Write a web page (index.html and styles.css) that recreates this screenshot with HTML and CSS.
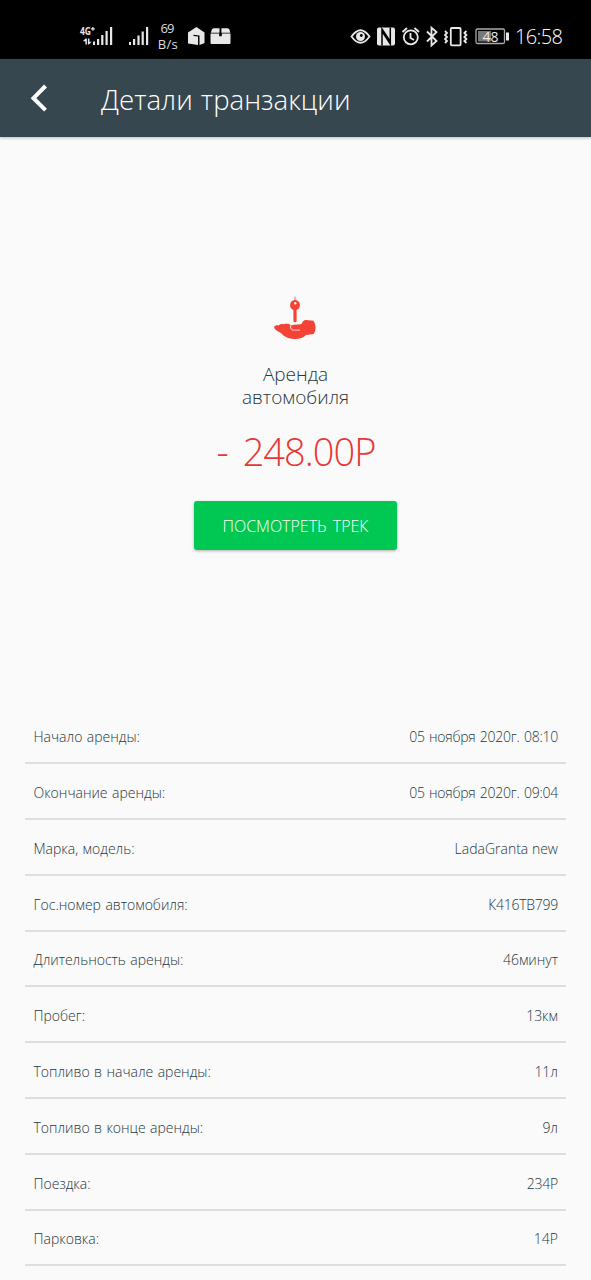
FILE: index.html
```html
<!DOCTYPE html>
<html lang="ru">
<head>
<meta charset="utf-8">
<title>Детали транзакции</title>
<link rel="stylesheet" href="styles.css">
</head>
<body>
<div class="status">
  <svg class="status-left" width="170" height="45" viewBox="0 0 170 45">
    <g fill="#e8e8e8">
      <text class="net" x="10" y="20" textLength="11" lengthAdjust="spacingAndGlyphs">4G</text>
      <path d="M21 13.200h1.300v-1.300h1.200v1.300h1.300v1.200h-1.300v1.300h-1.200v-1.300H21z"/>
      <path d="M12.800 26.200l2.800-2.700h1.300v6h-1.500v-3.300zM17.900 23.500h1.500v3.300h2.300l-2.800 2.700h-1z"/>
      <path d="M23 26.500h2V30h-2zM27 24h2.200v6h-2.200zM31.200 20h2.200v10h-2.200zM35.500 16h2.200v14h-2.200zM40 12h2.200v18H40z"/>
      <path d="M59 27h2v3h-2zM63 24h2.200v6H63zM67.400 20.500h2.200V30h-2.200zM71.600 16.500h2.200V30h-2.200zM76 12h2.200v18H76z"/>
      <path d="M118 17.500l8.500-5.500 8 5.500V28l-5 2V20.500l-6-.8v1.200l4.500.6V30L118 28.500z"/>
      <path d="M140.500 18.600h8.700v2.600h2.600v-2.600h8.700V28a1 1 0 0 1-1 1h-18a1 1 0 0 1-1-1zM142 14.200l1.500-1h6v4.600h-8.700zM151.400 13.200h6.400l1.500 1 1 3.600h-8.900z"/>
    </g>
    <g class="speed"><text x="97.500" y="18.300" text-anchor="middle" textLength="14">69</text><text x="97.800" y="33.800" text-anchor="middle" textLength="20">B/s</text></g>
  </svg>
  <svg class="status-right" width="240" height="45" viewBox="0 0 240 45">
    <g fill="none" stroke="#e8e8e8" stroke-width="1.800">
      <path d="M11.500 21.500q9-12.500 18 0q-9 12.500-18 0z"/><circle cx="20.500" cy="21.500" r="4.500" fill="#e8e8e8" stroke="none"/><circle cx="21.300" cy="20.500" r="1.400" fill="#000" stroke="none"/>
      <rect x="37" y="12.500" width="18" height="18" rx="2" fill="#e8e8e8" stroke="none"/>
      <path d="M42 30.500V14l8.300 12.500M50.300 12.500V29L42.500 17" stroke="#000" stroke-width="1.500"/>
      <circle cx="70.800" cy="22.300" r="7"/><path d="M70.500 18v5l3.500 2M62.500 17l4.500-4M79 17l-4.500-4"/>
      <path d="M87 16.500l9.500 9.500-5 4.500V12.700l5 4.300-9.500 9.500"/>
      <rect x="110.800" y="13" width="9.800" height="17.300" rx="1"/><path d="M105 16l2 2-2 2 2 2-2 2 2 2-2 2M126.400 16l-2 2 2 2-2 2 2 2-2 2 2 2"/>
      <rect x="136" y="14" width="28.500" height="14.500" rx="1.500" stroke="#aaa" stroke-width="1.300"/><path d="M138 16h13v10.500h-13z" fill="#777" stroke="none"/><path d="M167.500 17.500v8" stroke-width="3"/>
    </g>
    <text class="battery" x="150.500" y="26.800" text-anchor="middle" textLength="16">48</text>
    <text class="clock" x="175" y="28.800" textLength="48">16:58</text>
  </svg>
</div>
<header class="bar">
  <svg class="back" width="20" height="30" viewBox="0 0 20 30"><path d="M17.500 3L5.500 15.200l12 12" fill="none" stroke="#fff" stroke-width="4"/></svg>
  <h1 class="title">Детали транзакции</h1>
</header>
<main>
  <section class="summary">
    <svg class="rent" width="44" height="44" viewBox="0 0 44 44" fill="#f44336">
      <path d="M21.600 2a.4.400 0 0 1 .8 0v2.900a5.200 5.200 0 0 1 1.200 10V26.500q-1.600 1.500-3.200 0V14.900a5.200 5.200 0 0 1 1.200-10z"/>
      <circle cx="22.200" cy="8.300" r="1.200" fill="#fafafa"/>
      <path d="M1 32c1-1.800 3.500-2 4.500-1.400 1.200-1.700 3.500-2 5-1.400 3-.7 5.500-.2 7.300.8C24 29 24.500 29 28.500 29c1.300-3.300 2.800-4.300 4.800-4.100l7.200.8c2.800 4.500 2.600 10 0 13.300L33 40c-2.500 3-7 4.100-12 3.900-6-.5-9.500-2.200-12.500-5.500C7.500 37.200 1.500 35.700 1 32z"/>
      <path d="M27.500 29H20c-3.300.4-3.200 5.800 0 6.100h7" fill="none" stroke="#fafafa" stroke-width=".8"/>
    </svg>
    <p class="name">Аренда<br>автомобиля</p>
    <p class="amount">- 248.00Р</p>
    <button class="track">ПОСМОТРЕТЬ ТРЕК</button>
  </section>
  <dl class="details">
    <div class="row"><dt>Начало аренды:</dt><dd class="numeric">05 ноября 2020г. 08:10</dd></div>
    <div class="row"><dt>Окончание аренды:</dt><dd class="numeric">05 ноября 2020г. 09:04</dd></div>
    <div class="row"><dt>Марка, модель:</dt><dd>LadaGranta new</dd></div>
    <div class="row"><dt>Гос.номер автомобиля:</dt><dd class="numeric">К416ТВ799</dd></div>
    <div class="row"><dt>Длительность аренды:</dt><dd>46минут</dd></div>
    <div class="row"><dt>Пробег:</dt><dd>13км</dd></div>
    <div class="row"><dt>Топливо в начале аренды:</dt><dd>11л</dd></div>
    <div class="row"><dt>Топливо в конце аренды:</dt><dd>9л</dd></div>
    <div class="row"><dt>Поездка:</dt><dd class="numeric">234Р</dd></div>
    <div class="row"><dt>Парковка:</dt><dd>14Р</dd></div>
  </dl>
</main>
</body>
</html>
```
FILE: styles.css
```css
* { box-sizing: border-box; }
body { margin: 0; height: 1280px; overflow: hidden; background: #fafafa; color: #263740; font-family: "Open Sans", "Noto Sans", sans-serif; font-weight: 300; }
h1, p, dl, dd { margin: 0; }
.status { display: flex; justify-content: space-between; height: 59px; padding: 15px 11px 0 70px; background: #000; }
.net { font-size: 11px; font-weight: 700; }
.speed { font-size: 13px; font-weight: 400; fill: #ddd; }
.battery { font-size: 14px; font-weight: 400; fill: #e8e8e8; }
.clock { font-size: 20px; fill: #fff; }
.bar { display: flex; align-items: center; height: 78px; padding-left: 28px; background: #37474f; color: #fff; box-shadow: 0 1px 3px rgba(55, 71, 79, .35); }
.title { margin-left: 53px; padding-top: 2px; font-size: 27.6px; font-weight: 300; line-height: 40px; word-spacing: 1px; white-space: nowrap; }
.summary { display: flex; flex-direction: column; align-items: center; height: 571.4px; padding-top: 158px; }
.rent { margin-right: 2px; }
.name { margin-top: 24px; text-align: center; font-size: 19px; line-height: 22.5px; }
.amount { margin-top: 18px; padding-left: 1px; font-size: 38px; line-height: 50px; letter-spacing: -1px; word-spacing: 6px; color: #e53935; }
.track { width: 203px; height: 49px; margin-top: 25px; padding: 0; border: 0; border-radius: 3px; background: #00c853; color: #fff; font: 300 16px "Open Sans", "Noto Sans", sans-serif; word-spacing: 2px; white-space: nowrap; box-shadow: 0 1px 3px rgba(0, 0, 0, .3); }
.details { padding: 0 25px; }
.row { display: flex; justify-content: space-between; align-items: center; height: 55.8px; padding: 4px 8px 0; border-bottom: 2px solid #dedede; font-size: 14px; line-height: 20px; }
.row dt { padding-left: .5px; word-spacing: .8px; }
.numeric { letter-spacing: -.25px; word-spacing: 1px; }
```
